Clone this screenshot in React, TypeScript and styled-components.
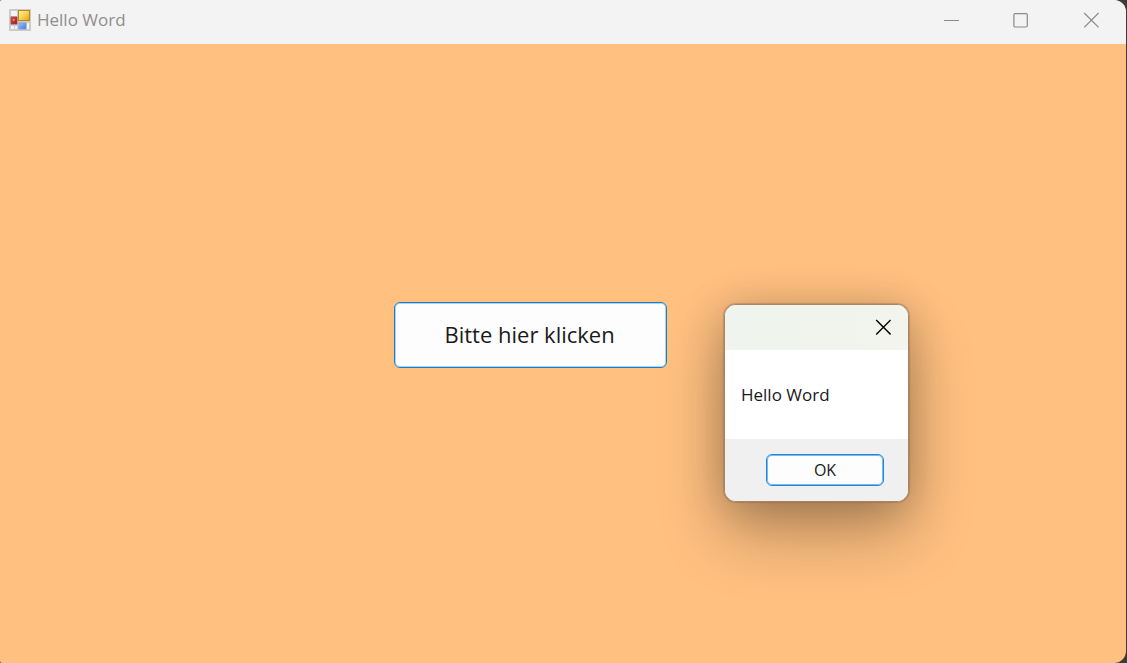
import React, { useState } from "react";
import styled, { createGlobalStyle } from "styled-components";

const GlobalStyle = createGlobalStyle`
  *, *::before, *::after { box-sizing: border-box; }
  body {
    margin: 0;
    background: #3c3a3a;
    font-family: "Open Sans", "Noto Sans", sans-serif;
    color: #1a1a1a;
  }
`;

const Desktop = styled.div`
  display: flex;
  min-height: 100vh;
  padding-right: 1px;
`;

const Window = styled.div`
  position: relative;
  flex: 1;
  display: flex;
  flex-direction: column;
  overflow: hidden;
  border-radius: 2px 12px 12px 2px;
  background: #ffc080;
`;

const TitleBar = styled.header`
  display: flex;
  align-items: center;
  height: 44px;
  padding: 0 0 4px 9px;
  background: #f3f3f3;
`;

const Title = styled.h1`
  flex: 1;
  margin: 0 0 0 6px;
  font-size: 17px;
  line-height: 24px;
  font-weight: 400;
  color: #8f8f8f;
`;

const CaptionButton = styled.button<{ $color: string; $width: number }>`
  display: flex;
  align-items: center;
  justify-content: center;
  width: ${(p) => p.$width}px;
  height: 40px;
  padding: 0;
  border: 0;
  background: transparent;
  color: ${(p) => p.$color};
`;

const Client = styled.main`
  flex: 1;
  padding: 258px 0 0 35%;
`;

const PushButton = styled.button<{ $size: "large" | "small" }>`
  width: ${(p) => (p.$size === "large" ? 273 : 118)}px;
  height: ${(p) => (p.$size === "large" ? 66 : 32)}px;
  padding: ${(p) => (p.$size === "large" ? "0 2px 2px 0" : "0")};
  border: ${(p) => (p.$size === "large" ? "1px solid #1a7fcb" : "1px solid #1f86dc")};
  border-radius: 6px;
  background: #fdfdfd;
  box-shadow: inset 0 0 0 1px ${(p) => (p.$size === "large" ? "#a9d3f2" : "#7ab9ee")};
  color: #1a1a1a;
  font-family: inherit;
  font-size: ${(p) => (p.$size === "large" ? 22 : 16)}px;
  line-height: 24px;
`;

const MessageBox = styled.div`
  position: absolute;
  top: 304px;
  left: 724px;
  width: 185px;
  overflow: hidden;
  border: 1px solid #a98560;
  border-radius: 12px;
  background: #ffffff;
  box-shadow: 0 0 1px 1px rgba(110, 90, 70, 0.3), 0 32px 64px rgba(0, 0, 0, 0.27),
    0 4px 44px rgba(0, 0, 0, 0.2);
`;

const MessageHeader = styled.div`
  display: flex;
  justify-content: flex-end;
  height: 45px;
  padding: 2px 4px 0 0;
  background: linear-gradient(90deg, #eff4ee, #f2f4ed);
`;

const MessageText = styled.p`
  margin: 0;
  padding: 33px 16px 32px;
  font-size: 17px;
  line-height: 24px;
`;

const MessageFooter = styled.div`
  display: flex;
  justify-content: flex-end;
  padding: 15px 24px;
  background: #f0f0f0;
`;

const FormIcon = () => (
  <svg width="22" height="22" viewBox="0 0 22 22" aria-hidden="true">
    <defs>
      <linearGradient id="gold" x1="0" y1="0" x2="1" y2="1">
        <stop offset="0" stopColor="#fff3a0" />
        <stop offset="0.5" stopColor="#fbd050" />
        <stop offset="1" stopColor="#e0a010" />
      </linearGradient>
      <linearGradient id="ruby" x1="0" y1="0" x2="1" y2="1">
        <stop offset="0" stopColor="#d85848" />
        <stop offset="1" stopColor="#a01818" />
      </linearGradient>
      <linearGradient id="sky" x1="0" y1="0" x2="1" y2="1">
        <stop offset="0" stopColor="#9cc4ff" />
        <stop offset="1" stopColor="#3c78e0" />
      </linearGradient>
    </defs>
    <rect width="22" height="22" fill="#cbcbcb" />
    <rect x="2" y="2" width="6" height="5" fill="#f4f4f4" />
    <rect x="2" y="17" width="3" height="3" fill="#f4f4f4" />
    <rect x="6" y="17" width="2" height="3" fill="#f4f4f4" />
    <rect x="18" y="14" width="2" height="6" fill="#f4f4f4" />
    <rect x="9.5" y="1.5" width="11" height="10" fill="url(#gold)" stroke="#b48a1c" />
    <rect x="2" y="8" width="6" height="7" fill="url(#ruby)" stroke="#a8403a" strokeWidth="0.8" />
    <rect x="10" y="14" width="7" height="6" fill="url(#sky)" stroke="#6f9be6" strokeWidth="0.8" />
    <rect x="4" y="10" width="1.6" height="2" fill="#e88878" />
  </svg>
);

const MinimizeIcon = () => (
  <svg width="16" height="16" viewBox="0 0 16 16" fill="none" stroke="currentColor" aria-hidden="true">
    <path d="M1 8.5H16" />
  </svg>
);

const MaximizeIcon = () => (
  <svg width="16" height="16" viewBox="0 0 16 16" fill="none" stroke="currentColor" aria-hidden="true">
    <rect x="0.9" y="1.6" width="13.4" height="13.4" rx="1.2" strokeWidth="1.2" />
  </svg>
);

const CloseIcon = ({ weight }: { weight: number }) => (
  <svg width="16" height="16" viewBox="0 0 16 16" fill="none" stroke="currentColor" strokeWidth={weight} aria-hidden="true">
    <path d="M1.2 1L15.6 15.4M15.6 1L1.2 15.4" />
  </svg>
);

export default function App() {
  const [open, setOpen] = useState(true);
  const close = () => setOpen(false);

  return (
    <>
      <GlobalStyle />
      <Desktop>
        <Window>
          <TitleBar>
            <FormIcon />
            <Title>Hello Word</Title>
            <CaptionButton type="button" aria-label="Minimieren" $color="#8a8a8a" $width={70}>
              <MinimizeIcon />
            </CaptionButton>
            <CaptionButton type="button" aria-label="Maximieren" $color="#8a8a8a" $width={70}>
              <MaximizeIcon />
            </CaptionButton>
            <CaptionButton type="button" aria-label="Schließen" $color="#8a8a8a" $width={70}>
              <CloseIcon weight={1.2} />
            </CaptionButton>
          </TitleBar>
          <Client>
            <PushButton type="button" $size="large" onClick={() => setOpen(true)}>
              Bitte hier klicken
            </PushButton>
          </Client>
          {open && (
            <MessageBox role="dialog" aria-describedby="message">
              <MessageHeader>
                <CaptionButton type="button" aria-label="Schließen" $color="#000000" $width={42} onClick={close}>
                  <CloseIcon weight={1.4} />
                </CaptionButton>
              </MessageHeader>
              <MessageText id="message">Hello Word</MessageText>
              <MessageFooter>
                <PushButton type="button" $size="small" onClick={close}>
                  OK
                </PushButton>
              </MessageFooter>
            </MessageBox>
          )}
        </Window>
      </Desktop>
    </>
  );
}
